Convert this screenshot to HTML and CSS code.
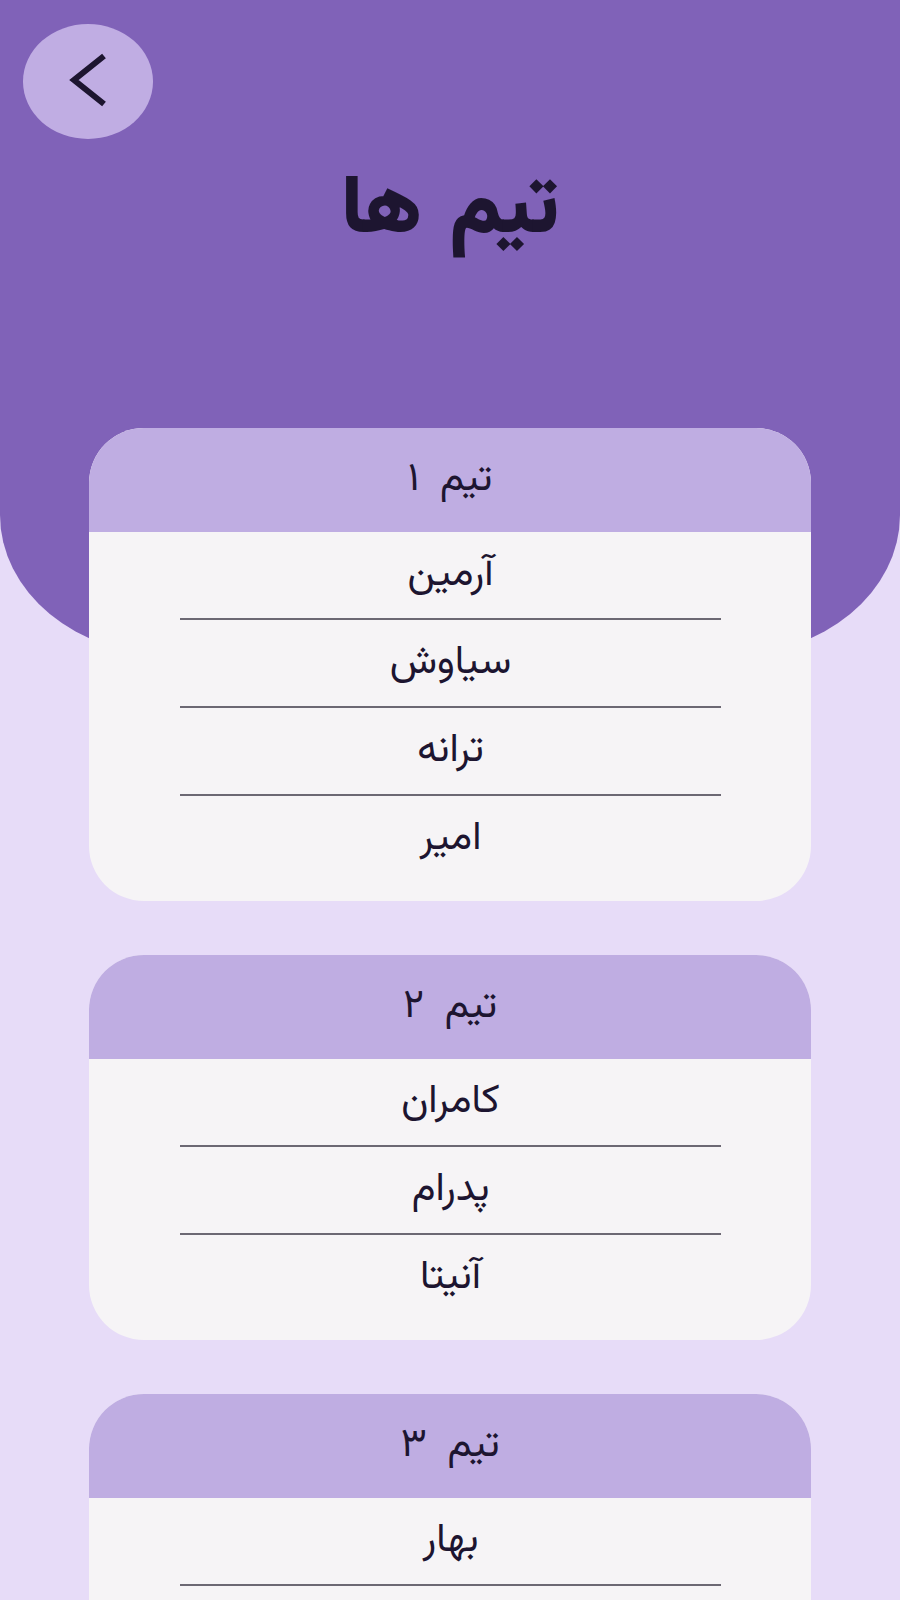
FILE: index.html
```html
<!DOCTYPE html>
<html lang="fa" dir="rtl">
<head>
<meta charset="utf-8">
<title>تیم ها</title>
<link rel="stylesheet" href="styles.css">
</head>
<body>
<div class="page">
  <header class="hero">
    <div class="topbar">
      <button class="back" aria-label="back">
        <svg width="42" height="58" viewBox="0 0 42 58"><polyline points="35,3 5,27 35,51" fill="none" stroke="#1d1530" stroke-width="6" stroke-linecap="butt" stroke-linejoin="miter"/></svg>
      </button>
    </div>
    <h1 class="title">تیم ها</h1>
  </header>
  <main class="teams">
    <section class="card">
      <div class="card-head">تیم ۱</div>
      <ul class="members">
        <li class="member">آرمین</li>
        <li class="member">سیاوش</li>
        <li class="member">ترانه</li>
        <li class="member">امیر</li>
      </ul>
    </section>
    <section class="card">
      <div class="card-head">تیم ۲</div>
      <ul class="members">
        <li class="member">کامران</li>
        <li class="member">پدرام</li>
        <li class="member">آنیتا</li>
      </ul>
    </section>
    <section class="card">
      <div class="card-head">تیم ۳</div>
      <ul class="members">
        <li class="member">بهار</li>
        <li class="member">نیما</li>
      </ul>
    </section>
  </main>
</div>
</body>
</html>
```
FILE: styles.css
```css
html, body {
  margin: 0;
  padding: 0;
}
body {
  background: #e7dcf8;
  font-family: "Vazirmatn", "Vazir", "Noto Sans Arabic", "DejaVu Sans", sans-serif;
  color: #1d1530;
}
.page {
  width: 900px;
  height: 1600px;
  overflow: hidden;
}
.hero {
  height: 655px;
  box-sizing: border-box;
  background: #8062b8;
  border-radius: 0 0 170px 170px / 0 0 140px 140px;
  padding-top: 24px;
}
.topbar {
  direction: ltr;
  display: flex;
  padding-left: 23px;
}
.back {
  width: 130px;
  height: 115px;
  border: none;
  border-radius: 50%;
  background: #c0ade3;
  display: flex;
  align-items: center;
  justify-content: center;
  padding: 0 0 0 4px;
}
.back svg {
  display: block;
}
.title {
  margin: 18px 0 0;
  text-align: center;
  font-size: 82px;
  font-weight: 900;
  line-height: 110px;
  word-spacing: 8px;
  color: #1d1530;
}
.teams {
  margin-top: -227px;
  display: flex;
  flex-direction: column;
  gap: 54px;
  padding: 0 89px;
}
.card {
  border-radius: 55px;
  overflow: hidden;
  background: #f6f4f6;
}
.card-head {
  height: 104px;
  background: #bfade2;
  display: flex;
  align-items: center;
  justify-content: center;
  font-size: 40px;
  font-weight: 400;
  word-spacing: 10px;
}
.members {
  list-style: none;
  margin: 0;
  padding: 0 0 19px;
}
.member {
  height: 86px;
  display: flex;
  align-items: center;
  justify-content: center;
  font-size: 40px;
  font-weight: 400;
  margin: 0 90px 0 91px;
  border-bottom: 2px solid #6c6873;
}
.member:last-child {
  border-bottom: none;
}
```
